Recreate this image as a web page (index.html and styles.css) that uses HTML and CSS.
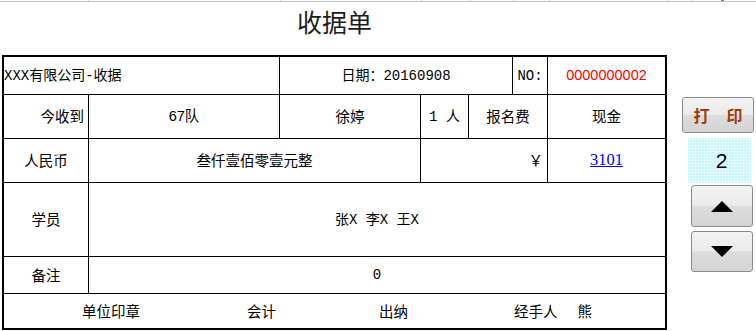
FILE: index.html
```html
<!DOCTYPE html>
<html lang="zh-CN">
<head>
<meta charset="utf-8">
<title>收据单</title>
<link rel="stylesheet" href="styles.css">
</head>
<body>
<div class="strip">
  <span></span><span></span><span></span><span></span><span></span><span></span><span></span><span></span><span class="dark"></span><span></span>
</div>
<div class="page">
  <div class="left">
    <div class="title">收据单</div>
    <div class="receipt">
      <div class="cell c12 lft mono">XXX有限公司-收据</div>
      <div class="cell c35 ctr mono">日期：20160908</div>
      <div class="cell c6 ctr mono">NO:</div>
      <div class="cell c7 ctr sans red last">0000000002</div>

      <div class="cell c1 rgt">今收到</div>
      <div class="cell c2 ctr sans">67队</div>
      <div class="cell c3 ctr">徐婷</div>
      <div class="cell c4 ctr mono">1 人</div>
      <div class="cell c56 ctr">报名费</div>
      <div class="cell c7 ctr last">现金</div>

      <div class="cell c1 ctr">人民币</div>
      <div class="cell c23 ctr">叁仟壹佰零壹元整</div>
      <div class="cell c46 rgt">￥</div>
      <div class="cell c7 ctr last"><a class="link" href="#">3101</a></div>

      <div class="cell c1 ctr">学员</div>
      <div class="cell c27 ctr mono last">张X 李X 王X</div>

      <div class="cell c1 ctr">备注</div>
      <div class="cell c27 ctr mono last">0</div>

      <div class="cell c17 sign last bottom">
        <span class="s1">单位印章</span>
        <span class="s2">会计</span>
        <span class="s3">出纳</span>
        <span class="s4">经手人</span><span class="s5">熊</span>
      </div>
    </div>
  </div>
  <div class="right">
    <button class="btn btn-print"><span>打</span><span class="gap">印</span></button>
    <div class="count">2</div>
    <button class="btn btn-arrow up"><span class="tri-up"></span></button>
    <button class="btn btn-arrow down"><span class="tri-down"></span></button>
  </div>
</div>
</body>
</html>
```

FILE: styles.css
```css
* { box-sizing: border-box; }
html, body { margin: 0; padding: 0; background: #fff; }
body {
  width: 756px;
  height: 331px;
  overflow: hidden;
  font-family: "Noto Sans CJK SC", "Liberation Sans", sans-serif;
  color: #000;
}

.strip {
  display: grid;
  grid-template-columns: 89px 192px 141px 49px 43px 36px 119px 23px 32px 1fr;
  height: 2px;
  border-bottom: 1px solid #c4c4c4;
}
.strip span { border-right: 1px solid #d4d4d4; }
.strip span.dark { border-right: 3px solid #777; }
.strip span:last-child { border-right: none; }

.page {
  display: flex;
  align-items: flex-start;
}

.left {
  margin-left: 2px;
  width: 665px;
}

.title {
  height: 53px;
  padding-top: 7px;
  text-align: center;
  font-size: 25px;
  line-height: 25px;
  color: #1c1c1c;
  font-weight: 400;
  font-family: "Noto Sans CJK SC", sans-serif;
}

.receipt {
  display: grid;
  grid-template-columns: 85px 191px 141px 48px 44px 35px 117px;
  grid-template-rows: 38px 44px 44px 74px 37px 34px;
  border: 2px solid #000;
  font-size: 14.5px;
}

.cell {
  display: flex;
  align-items: center;
  border-right: 1px solid #000;
  border-bottom: 1px solid #000;
  white-space: nowrap;
  overflow: hidden;
  line-height: 1;
}
.cell.last { border-right: none; }
.cell.bottom { border-bottom: none; }

.lft { justify-content: flex-start; padding-left: 0; }
.ctr { justify-content: center; }
.rgt { justify-content: flex-end; padding-right: 4px; }

.c1 { grid-column: 1 / 2; }
.c2 { grid-column: 2 / 3; }
.c3 { grid-column: 3 / 4; }
.c4 { grid-column: 4 / 5; }
.c6 { grid-column: 6 / 7; }
.c7 { grid-column: 7 / 8; }
.c12 { grid-column: 1 / 3; }
.c35 { grid-column: 3 / 6; }
.c56 { grid-column: 5 / 7; }
.c23 { grid-column: 2 / 4; }
.c46 { grid-column: 4 / 7; }
.c27 { grid-column: 2 / 8; }
.c17 { grid-column: 1 / 8; }

.mono { font-family: "Liberation Mono", "Noto Sans CJK SC", monospace; font-size: 14px; }
.sans { font-family: "Liberation Sans", "Noto Sans CJK SC", sans-serif; }
.red { color: #ff0000; }
.link {
  font-family: "Liberation Serif", serif;
  color: #0000ff;
  text-decoration: underline;
  font-size: 16.5px;
}

.sign { justify-content: flex-start; }
.sign .s1 { margin-left: 78px; }
.sign .s2 { margin-left: 107px; }
.sign .s3 { margin-left: 103px; }
.sign .s4 { margin-left: 106px; }
.sign .s5 { margin-left: 20px; }

.right {
  width: 74px;
  margin-left: 15px;
  margin-top: 95px;
  display: flex;
  flex-direction: column;
}

.btn {
  display: flex;
  align-items: center;
  justify-content: center;
  padding: 0;
  border: 1px solid #8c8c8c;
  border-radius: 3px;
  background: linear-gradient(#f3f3f3 0%, #ebebeb 48%, #dcdcdc 52%, #d4d4d4 100%);
  cursor: pointer;
}

.btn-print {
  width: 72px;
  height: 36px;
  font-family: "Noto Sans CJK SC", serif;
  font-weight: 700;
  font-size: 16px;
  color: #a33a08;
}
.btn-print .gap { margin-left: 17px; }

.count {
  margin-top: 5px;
  margin-left: 6px;
  width: 63px;
  height: 45px;
  display: flex;
  align-items: center;
  justify-content: center;
  padding-left: 4px;
  font-family: "Liberation Sans", sans-serif;
  font-size: 21px;
  background-color: #c9f8fa;
  background-image: radial-gradient(circle, #ffffff 0.8px, transparent 1.1px);
  background-size: 3px 3px;
}

.btn-arrow {
  width: 62px;
  margin-left: 9px;
}
.btn-arrow.up { height: 42px; margin-top: 2px; }
.btn-arrow.down { height: 41px; margin-top: 4px; }

.tri-up {
  width: 0; height: 0;
  border-left: 11px solid transparent;
  border-right: 11px solid transparent;
  border-bottom: 11px solid #000;
}
.tri-down {
  width: 0; height: 0;
  border-left: 11px solid transparent;
  border-right: 11px solid transparent;
  border-top: 11px solid #000;
}
```
